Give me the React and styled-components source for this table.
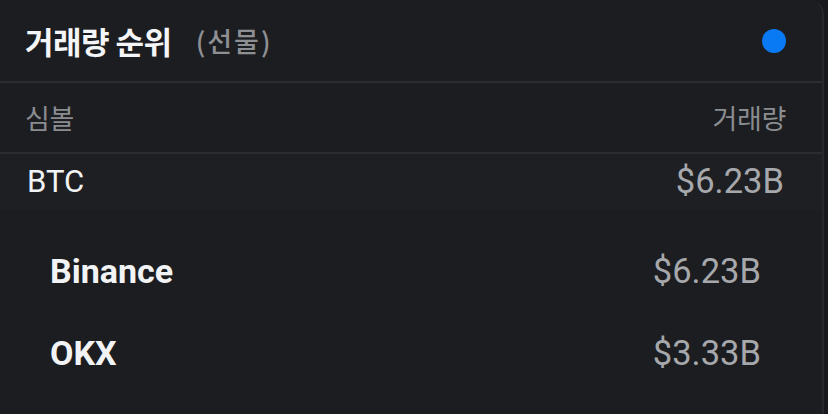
import React from "react";
import styled, { createGlobalStyle } from "styled-components";

const Global = createGlobalStyle`
  html, body { margin: 0; padding: 0; background: #17191c; }
  body { font-family: Roboto, "Noto Sans CJK KR", sans-serif; }
`;

const Card = styled.div`
  width: 822px;
  height: 414px;
  background: #1b1d21;
  border-right: 2px solid #26282c;
  border-top-right-radius: 14px;
  box-sizing: content-box;
  overflow: hidden;
`;

const Header = styled.div`
  height: 81px;
  display: flex;
  align-items: center;
  justify-content: space-between;
  padding: 0 36px 0 25px;
  border-bottom: 2px solid #2a2c30;
`;

const TitleWrap = styled.div`
  display: flex;
  align-items: center;
  gap: 24px;
`;

const Title = styled.h1`
  margin: 0;
  font-family: "Noto Sans CJK KR", sans-serif;
  font-size: 31px;
  font-weight: 700;
  color: #f4f5f6;
  letter-spacing: -0.5px;
`;

const Sub = styled.span`
  font-family: "Noto Sans CJK KR", sans-serif;
  font-size: 27px;
  font-weight: 500;
  color: #8d8f93;
  letter-spacing: 2px;
`;

const Dot = styled.span`
  width: 24px;
  height: 24px;
  border-radius: 50%;
  background: #0a79f4;
  margin-top: 1px;
`;

const ColHead = styled.div`
  height: 69px;
  display: flex;
  align-items: center;
  justify-content: space-between;
  padding: 0 36px 0 25px;
  border-bottom: 2px solid #2a2c30;
  font-family: "Noto Sans CJK KR", sans-serif;
  font-size: 27px;
  color: #8a8c90;
  letter-spacing: -0.3px;
`;

const Row = styled.div`
  height: ${(p) => (p.$sub ? "82px" : "56px")};
  display: flex;
  align-items: center;
  justify-content: space-between;
  padding: ${(p) => (p.$sub ? "0 61px 0 50px" : "0 38px 0 27px")};
  background: ${(p) => (p.$sub ? "transparent" : "#1d1f23")};
`;

const SubList = styled.div`
  padding-top: 20px;
`;

const Symbol = styled.span`
  font-size: ${(p) => (p.$sub ? "34px" : "31px")};
  font-weight: ${(p) => (p.$sub ? 700 : 400)};
  color: #f2f3f4;
  margin-top: ${(p) => (p.$sub ? "0" : "-2px")};
`;

const Value = styled.span`
  font-size: 34.5px;
  font-weight: 400;
  color: #a6a8ac;
  margin-top: ${(p) => (p.$sub ? "0" : "-2px")};
`;

const data = [
  { name: "Binance", value: "$6.23B" },
  { name: "OKX", value: "$3.33B" },
];

export default function App() {
  return (
    <>
      <Global />
      <Card>
        <Header>
          <TitleWrap>
            <Title>거래량 순위</Title>
            <Sub>(선물)</Sub>
          </TitleWrap>
          <Dot />
        </Header>
        <ColHead>
          <span>심볼</span>
          <span>거래량</span>
        </ColHead>
        <Row>
          <Symbol>BTC</Symbol>
          <Value>$6.23B</Value>
        </Row>
        <SubList>
          {data.map((d) => (
            <Row $sub key={d.name}>
              <Symbol $sub>{d.name}</Symbol>
              <Value $sub>{d.value}</Value>
            </Row>
          ))}
        </SubList>
      </Card>
    </>
  );
}
